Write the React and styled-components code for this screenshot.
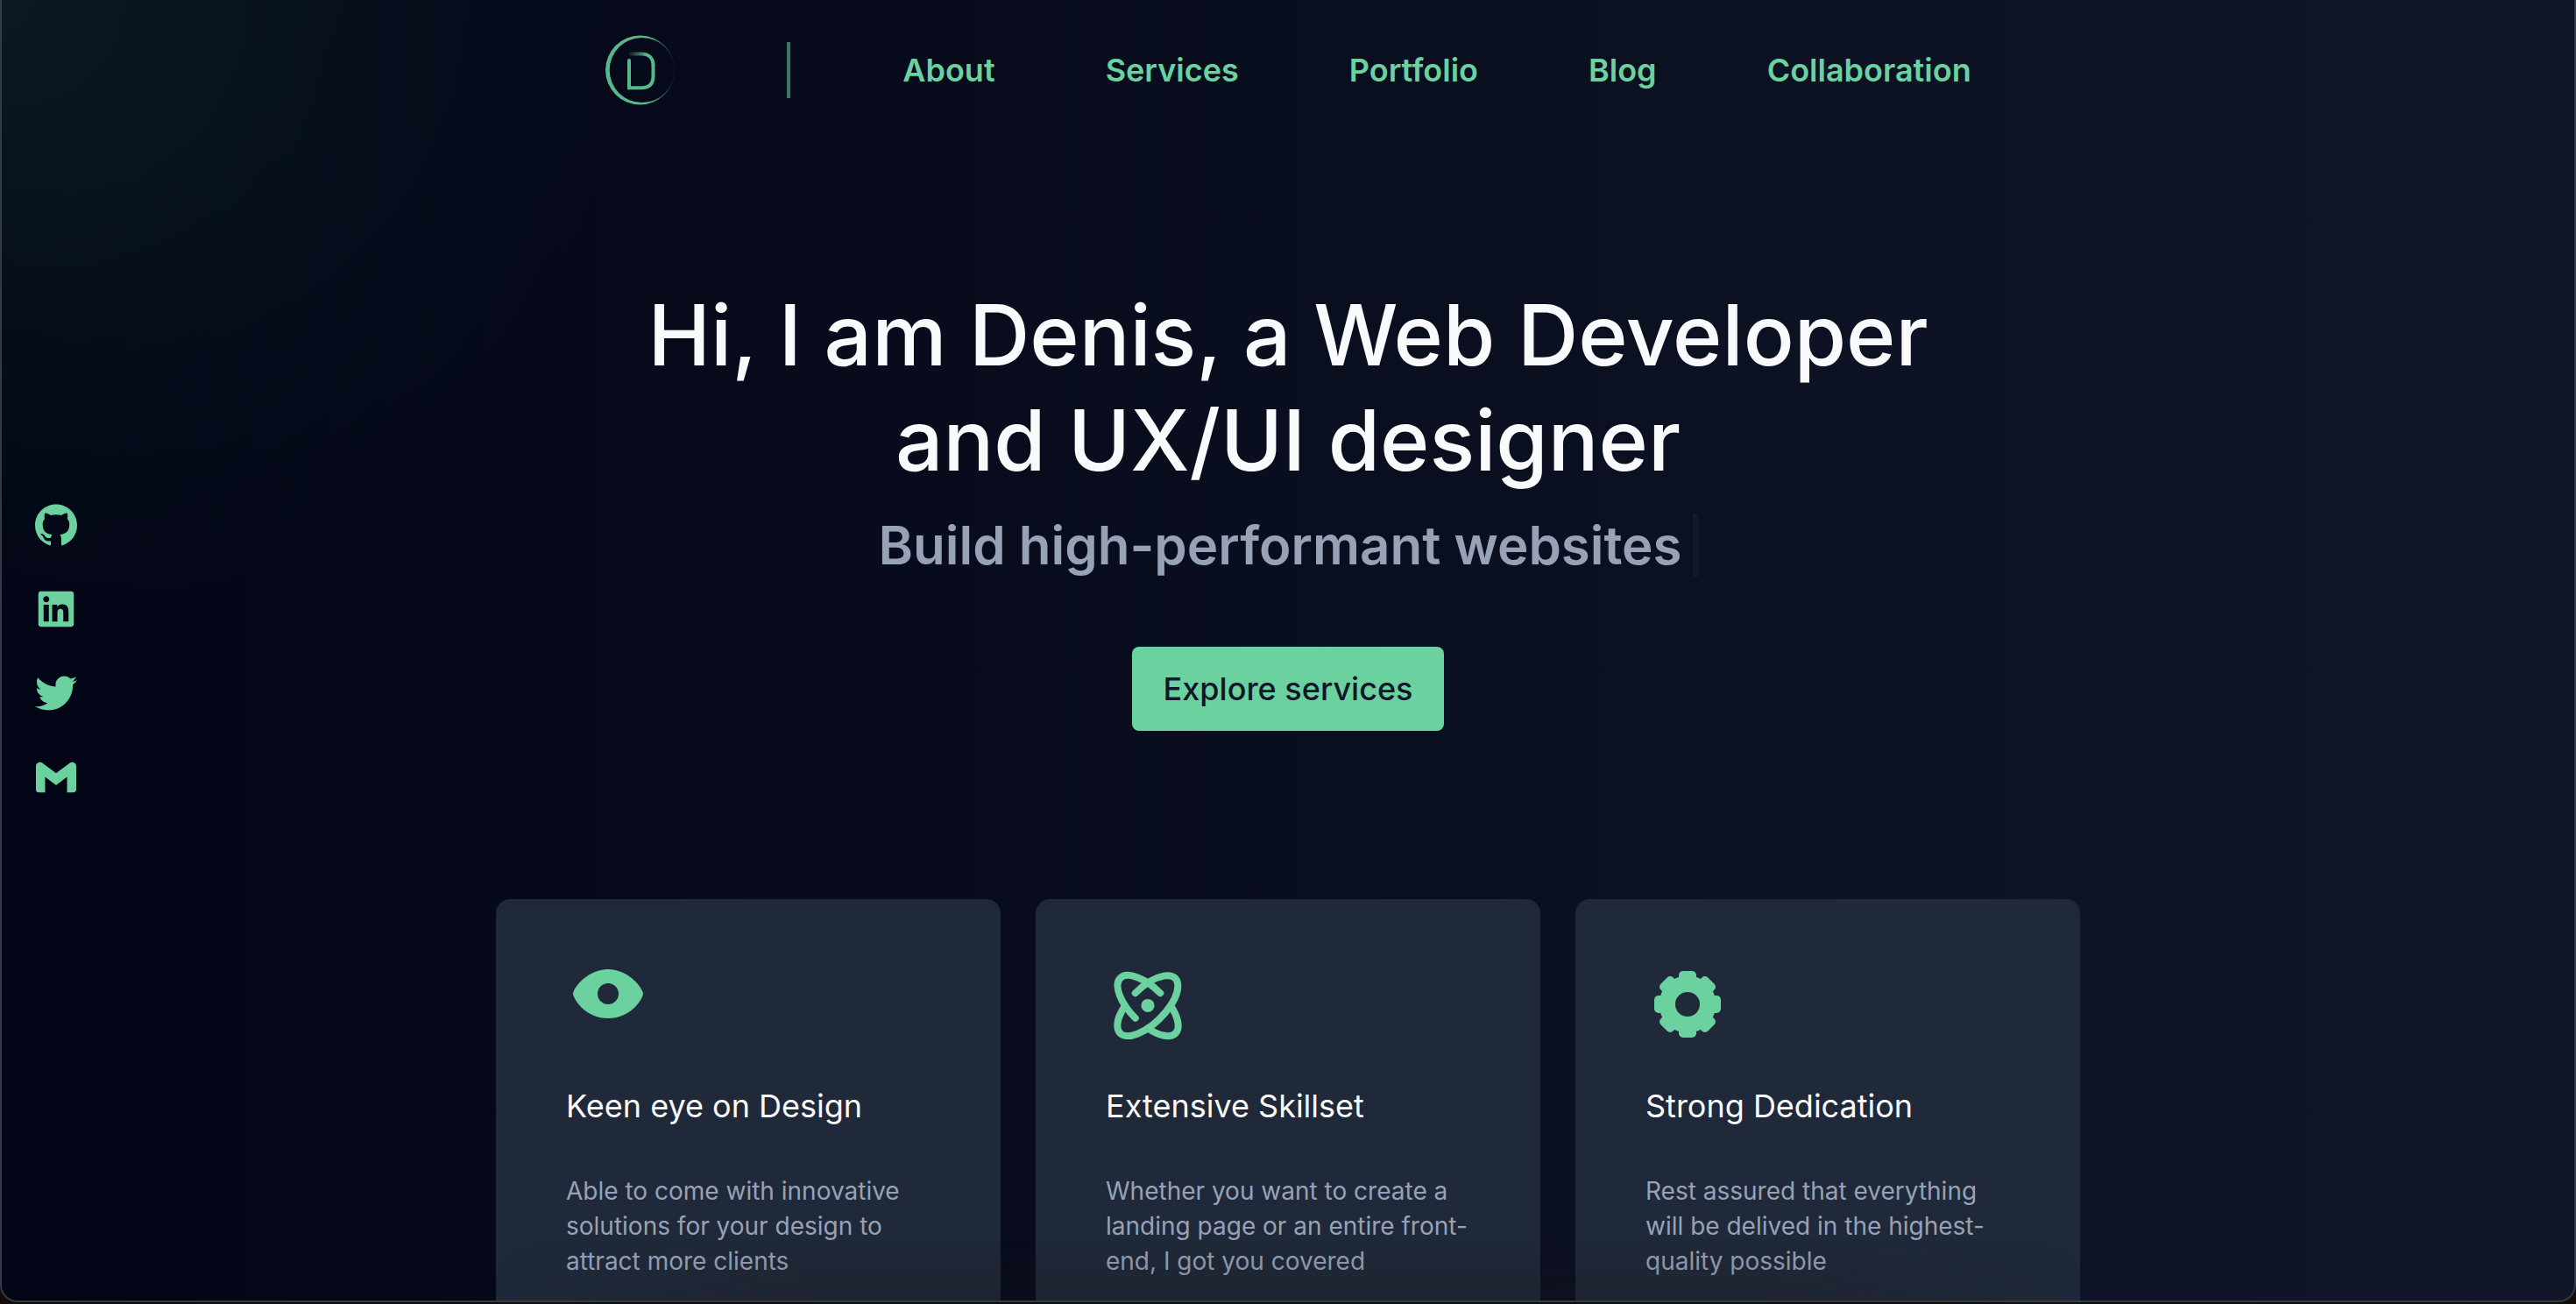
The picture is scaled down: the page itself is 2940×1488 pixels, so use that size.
import React from "react";
import styled, { createGlobalStyle } from "styled-components";
import { SiGithub, SiGmail } from "react-icons/si";
import { RiLinkedinBoxFill } from "react-icons/ri";
import { FaTwitter } from "react-icons/fa";

const color = {
  green: "#6bd29f",
  logo: "#57b889",
  divider: "#3d7662",
  heading: "#f9fafc",
  muted: "#97a2b7",
  card: "#202939",
  night: "#020515",
  slate: "#111729",
};

const GlobalStyle = createGlobalStyle`
  *, *::before, *::after { box-sizing: border-box; }
  body {
    margin: 0;
    background: #120c06;
    color: ${color.heading};
    font-family: Inter, "Liberation Sans", sans-serif;
  }
  h1, h2, p, ul { margin: 0; padding: 0; }
  ul { list-style: none; }
  a { color: inherit; text-decoration: none; }
`;

const Backdrop = styled.div`
  height: 100vh;
  padding-bottom: 2px;
`;

const Frame = styled.div`
  display: grid;
  grid-template: minmax(0, 1fr) / minmax(0, 1fr);
  height: 100%;
  overflow: hidden;
  border: 2px solid #343a47;
  border-top: 0;
  border-radius: 0 0 20px 20px;
  background:
    radial-gradient(circle 720px at 0 0, rgba(70, 150, 120, 0.14), rgba(70, 150, 120, 0.06) 50%, transparent),
    linear-gradient(to right, ${color.night}, ${color.slate});
`;

const Content = styled.div`
  grid-area: 1 / 1;
  display: flex;
  flex-direction: column;
  align-items: center;
`;

const Header = styled.header`
  display: flex;
  align-items: center;
  gap: 128px;
  height: 160px;
  flex: none;
`;

const LogoLink = styled.a`
  display: flex;
`;

const Divider = styled.span`
  width: 4px;
  height: 64px;
  background: ${color.divider};
`;

const Nav = styled.nav`
  display: flex;
  gap: 126px;
  color: ${color.green};
  font-size: 36px;
  font-weight: 600;
  line-height: 56px;
`;

const SocialRail = styled.ul`
  grid-area: 1 / 1;
  align-self: center;
  justify-self: start;
  z-index: 1;
  display: flex;
  flex-direction: column;
  gap: 48px;
  padding: 2px 0 0 38px;
  color: ${color.green};
`;

const SocialLink = styled.a`
  display: flex;
  align-items: center;
  justify-content: center;
  width: 48px;
  height: 48px;

  svg {
    flex: none;
  }
`;

const Hero = styled.section`
  display: flex;
  flex-direction: column;
  align-items: center;
  padding: 162px 40px 0;
`;

const Title = styled.h1`
  max-width: 1536px;
  font-size: 96px;
  font-weight: 500;
  line-height: 120px;
  text-align: center;
`;

const Tagline = styled.p`
  margin-top: 24px;
  padding-right: 12px;
  border-right: 6px solid #131929;
  color: ${color.muted};
  font-size: 60px;
  font-weight: 600;
  line-height: 72px;
`;

const PrimaryButton = styled.button`
  height: 96px;
  margin-top: 80px;
  padding: 0 36px;
  border: 0;
  border-radius: 8px;
  background: ${color.green};
  color: #111729;
  font: 500 36px/56px Inter, "Liberation Sans", sans-serif;
  cursor: pointer;
`;

const Cards = styled.section`
  display: grid;
  grid-template-columns: repeat(3, minmax(0, 1fr));
  gap: 40px;
  width: 100%;
  max-width: 1808px;
  margin-top: 192px;
`;

const Card = styled.article`
  padding: 72px 80px 80px;
  border-radius: 16px;
  background: ${color.card};
  color: ${color.green};

  svg {
    display: block;
  }
`;

const CardTitle = styled.h2`
  margin-top: 40px;
  color: ${color.heading};
  font-size: 36px;
  font-weight: 400;
  line-height: 56px;
`;

const CardText = styled.p`
  margin-top: 49px;
  color: ${color.muted};
  font-size: 28px;
  line-height: 40px;
`;

const BottomShade = styled.div`
  grid-area: 1 / 1;
  align-self: end;
  z-index: 1;
  height: 72px;
  margin: 0 560px;
  background: linear-gradient(to bottom, transparent, rgba(24, 16, 16, 0.2));
  mask-image: linear-gradient(to right, transparent, #000 20%, #000 80%, transparent);
  pointer-events: none;
`;

function Logo() {
  return (
    <svg width="80" height="80" viewBox="0 0 80 80" fill="none" aria-hidden="true">
      <defs>
        <linearGradient id="ringFade" gradientUnits="userSpaceOnUse" x1="50" y1="0" x2="80" y2="0">
          <stop offset="0" stopColor={color.logo} />
          <stop offset="1" stopColor={color.logo} stopOpacity="0.2" />
        </linearGradient>
        <linearGradient id="stemFade" gradientUnits="userSpaceOnUse" x1="28" y1="0" x2="48" y2="0">
          <stop offset="0" stopColor={color.logo} stopOpacity="0.08" />
          <stop offset="1" stopColor={color.logo} />
        </linearGradient>
      </defs>
      <path
        fill="url(#ringFade)"
        fillRule="evenodd"
        d="M40.5 0.5a39.5 39.5 0 1 0 0 79a39.5 39.5 0 1 0 0-79zM42.7 3a37 37 0 1 1 0 74a37 37 0 1 1 0-74z"
      />
      <path stroke="url(#stemFade)" strokeWidth="4" d="M28 21.500H42C50 21.500 55.500 26 55.500 34.500" />
      <path
        stroke={color.logo}
        strokeWidth="4"
        d="M55.500 34V46.500C55.500 56 50.500 60.300 42 60.300H28V29"
        strokeLinecap="round"
      />
    </svg>
  );
}

function EyeIcon() {
  return (
    <svg width="96" height="96" viewBox="0 0 24 24" fill="currentColor" aria-hidden="true">
      <path
        fillRule="evenodd"
        d="M2.100 8.500C3.300 5.600 7.300 2 12 2s8.700 3.600 9.900 6.500q.2.500 0 1C20.700 12.600 17 16 12 16S3.300 12.600 2.100 9.500q-.2-.5 0-1zM12 6a3 3 0 1 0 0 6a3 3 0 1 0 0-6z"
      />
    </svg>
  );
}

function AtomIcon() {
  return (
    <svg
      width="96"
      height="96"
      viewBox="0 0 24 24"
      fill="none"
      stroke="currentColor"
      strokeWidth="2"
      strokeLinecap="round"
      aria-hidden="true"
    >
      <path d="M8.440 8.810A11.100 5.030 -45 1 1 5.500 12.370" />
      <path d="M8.440 15.930A11.100 5.030 45 0 1 15.560 8.810" />
      <path d="M18.500 12.370A11.100 5.030 45 0 1 12 18.870" />
      <circle cx="12" cy="12.370" r="1.900" fill="currentColor" stroke="none" />
    </svg>
  );
}

function GearIcon() {
  const teeth = [0, 45, 90, 135, 180, 225, 270, 315];
  return (
    <svg width="96" height="96" viewBox="-12 -12 24 24" fill="currentColor" aria-hidden="true">
      <circle r="5.800" fill="none" stroke="currentColor" strokeWidth="4.600" />
      {teeth.map((angle) => (
        <rect key={angle} x="-2.500" y="-9.500" width="5" height="4" rx="1.200" transform={`rotate(${angle})`} />
      ))}
    </svg>
  );
}

const links = ["About", "Services", "Portfolio", "Blog", "Collaboration"];

const socials = [
  { name: "GitHub", Icon: SiGithub, size: 48 },
  { name: "LinkedIn", Icon: RiLinkedinBoxFill, size: 54 },
  { name: "Twitter", Icon: FaTwitter, size: 48 },
  { name: "Email", Icon: SiGmail, size: 46 },
];

const strengths = [
  {
    title: "Keen eye on Design",
    text: "Able to come with innovative solutions for your design to attract more clients",
    Icon: EyeIcon,
  },
  {
    title: "Extensive Skillset",
    text: "Whether you want to create a landing page or an entire front-end, I got you covered",
    Icon: AtomIcon,
  },
  {
    title: "Strong Dedication",
    text: "Rest assured that everything will be delived in the highest-quality possible",
    Icon: GearIcon,
  },
];

export default function App() {
  return (
    <>
      <GlobalStyle />
      <Backdrop>
        <Frame>
          <SocialRail>
            {socials.map(({ name, Icon, size }) => (
              <li key={name}>
                <SocialLink href="#" aria-label={name}>
                  <Icon size={size} />
                </SocialLink>
              </li>
            ))}
          </SocialRail>
          <Content>
            <Header>
              <LogoLink href="#" aria-label="Home">
                <Logo />
              </LogoLink>
              <Divider />
              <Nav>
                {links.map((label) => (
                  <a key={label} href={`#${label.toLowerCase()}`}>
                    {label}
                  </a>
                ))}
              </Nav>
            </Header>
            <Hero>
              <Title>Hi, I am Denis, a Web Developer and UX/UI designer</Title>
              <Tagline>Build high-performant websites</Tagline>
              <PrimaryButton type="button">Explore services</PrimaryButton>
            </Hero>
            <Cards>
              {strengths.map(({ title, text, Icon }) => (
                <Card key={title}>
                  <Icon />
                  <CardTitle>{title}</CardTitle>
                  <CardText>{text}</CardText>
                </Card>
              ))}
            </Cards>
          </Content>
          <BottomShade />
        </Frame>
      </Backdrop>
    </>
  );
}
